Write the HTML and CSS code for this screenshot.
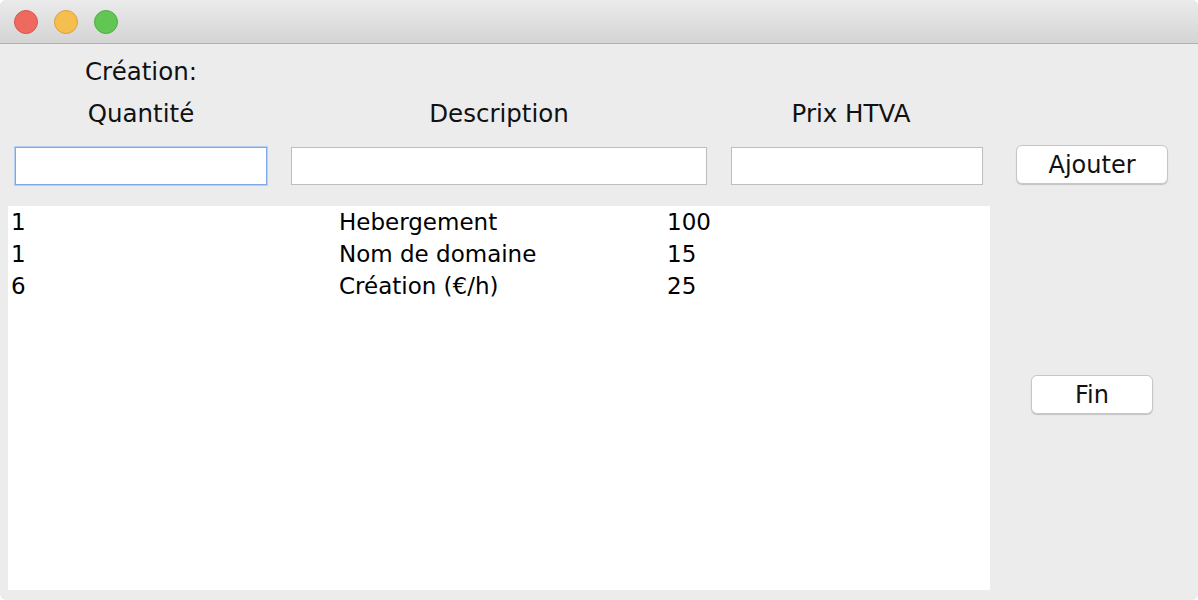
FILE: index.html
```html
<!DOCTYPE html>
<html lang="fr">
<head>
<meta charset="utf-8">
<title>Création</title>
<link rel="stylesheet" href="styles.css">
</head>
<body>
<div class="window">
  <div class="titlebar">
    <span class="light red"></span>
    <span class="light yellow"></span>
    <span class="light green"></span>
  </div>
  <div class="content">
    <div class="title-label">Création:</div>
    <div class="form">
      <div class="head">Quantité</div>
      <div class="head">Description</div>
      <div class="head head-prix">Prix HTVA</div>
      <div></div>
      <input class="field focused" type="text">
      <input class="field" type="text">
      <input class="field" type="text">
      <button class="btn btn-add">Ajouter</button>
    </div>
    <div class="main">
      <div class="list">
        <div class="row"><span>1</span><span>Hebergement</span><span>100</span></div>
        <div class="row"><span>1</span><span>Nom de domaine</span><span>15</span></div>
        <div class="row"><span>6</span><span>Création (€/h)</span><span>25</span></div>
      </div>
      <div class="side">
        <button class="btn btn-fin">Fin</button>
      </div>
    </div>
  </div>
</div>
</body>
</html>
```

FILE: styles.css
```css
html, body {
  margin: 0;
  padding: 0;
  background: #ffffff;
}

body {
  font-family: "DejaVu Sans", "Noto Sans", sans-serif;
  color: #111;
}

.window {
  width: 1198px;
  height: 600px;
  background: #ececec;
  border-radius: 6px;
  overflow: hidden;
  display: flex;
  flex-direction: column;
}

.titlebar {
  height: 43px;
  border-bottom: 1px solid #b0b0b0;
  background: linear-gradient(#ebebeb, #d4d4d4);
  display: flex;
  align-items: center;
  gap: 16px;
  padding-left: 14px;
  box-sizing: content-box;
  flex: none;
}

.light {
  width: 22px;
  height: 22px;
  border-radius: 50%;
  border: 1px solid transparent;
}

.red { background: #ee6a5f; border-color: #d8564b; }
.yellow { background: #f5bf4f; border-color: #d9a23e; }
.green { background: #62c655; border-color: #4fae41; }

.content {
  flex: 1;
  padding-top: 14px;
  display: flex;
  flex-direction: column;
}

.title-label {
  font-size: 24.5px;
  line-height: 28px;
  padding-left: 85px;
}

.form {
  margin-top: 14px;
  display: grid;
  grid-template-columns: 252px 416px 252px 152px;
  column-gap: 24px;
  padding-left: 15px;
}

.form .btn-add {
  margin-left: 9px;
}

.head {
  font-size: 24.5px;
  line-height: 28px;
  text-align: center;
  margin-bottom: 19px;
}

.head-prix {
  padding-right: 12px;
}

.field {
  height: 38px;
  box-sizing: border-box;
  border: 1px solid #bdbdbd;
  background: #fff;
  margin: 0;
  padding: 0 6px;
  font: inherit;
  outline: none;
}

.field.focused {
  border: 1px solid #7eaaea;
  box-shadow: 0 0 0 1px #b5cff3;
}

.btn {
  font-family: "DejaVu Sans", "Noto Sans", sans-serif;
  font-size: 24px;
  color: #111;
  background: #fff;
  border: 1px solid #c6c6c6;
  border-radius: 6px;
  box-shadow: 0 1px 1px rgba(0, 0, 0, 0.18);
  height: 39px;
  padding: 0;
  margin: 0;
}

.btn-add {
  margin-top: -2px;
  width: 152px;
}

.main {
  margin-top: 21px;
  display: flex;
  flex: 1;
  padding-bottom: 10px;
}

.list {
  margin-left: 8px;
  width: 982px;
  background: #fff;
}

.row {
  display: grid;
  grid-template-columns: 328px 328px 1fr;
  padding-left: 3px;
  font-size: 23px;
  line-height: 32px;
  color: #000;
}

.side {
  flex: 1;
  display: flex;
  justify-content: center;
  padding-top: 169px;
  align-items: flex-start;
}

.btn-fin {
  width: 122px;
  margin-left: -4px;
}
```
